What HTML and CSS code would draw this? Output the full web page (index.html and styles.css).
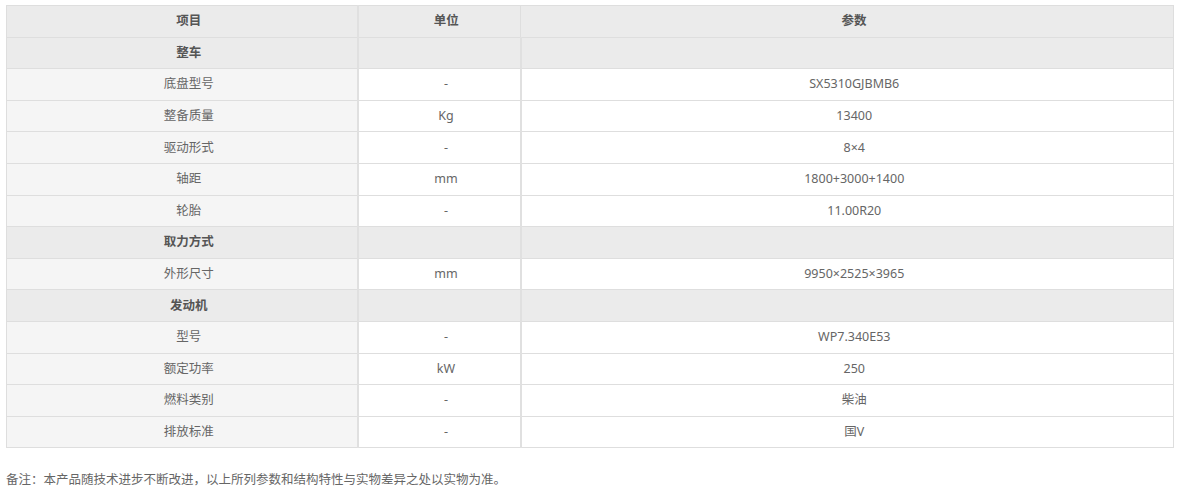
FILE: index.html
```html
<!DOCTYPE html>
<html lang="zh-CN">
<head>
<meta charset="utf-8">
<link rel="stylesheet" href="styles.css">
</head>
<body>
<div class="page">
  <table class="spec">
    <colgroup>
      <col class="c1"><col class="c2"><col class="c3">
    </colgroup>
    <thead>
      <tr class="head"><th>项目</th><th>单位</th><th>参数</th></tr>
    </thead>
    <tbody>
      <tr class="group"><th>整车</th><td></td><td></td></tr>
      <tr><th>底盘型号</th><td>-</td><td>SX5310GJBMB6</td></tr>
      <tr><th>整备质量</th><td>Kg</td><td>13400</td></tr>
      <tr><th>驱动形式</th><td>-</td><td>8×4</td></tr>
      <tr><th>轴距</th><td>mm</td><td>1800+3000+1400</td></tr>
      <tr><th>轮胎</th><td>-</td><td>11.00R20</td></tr>
      <tr class="group"><th>取力方式</th><td></td><td></td></tr>
      <tr><th>外形尺寸</th><td>mm</td><td>9950×2525×3965</td></tr>
      <tr class="group"><th>发动机</th><td></td><td></td></tr>
      <tr><th>型号</th><td>-</td><td>WP7.340E53</td></tr>
      <tr><th>额定功率</th><td>kW</td><td>250</td></tr>
      <tr><th>燃料类别</th><td>-</td><td>柴油</td></tr>
      <tr><th>排放标准</th><td>-</td><td>国V</td></tr>
    </tbody>
  </table>
  <p class="note">备注：本产品随技术进步不断改进，以上所列参数和结构特性与实物差异之处以实物为准。</p>
</div>
</body>
</html>
```
FILE: styles.css
```css
html, body {
  margin: 0;
  padding: 0;
  background: #fff;
}
body {
  font-family: "Noto Sans", "Noto Sans CJK SC", sans-serif;
  color: #666;
  font-size: 12.5px;
}
.page {
  padding: 5px 5px 0 6px;
}
.spec {
  width: 1168px;
  border-collapse: collapse;
  table-layout: fixed;
  border: 1px solid #dcdcdc;
}
.c1 { width: 351px; }
.c2 { width: 163px; }
.c3 { width: auto; }
.spec th, .spec td {
  height: 30.6px;
  padding: 0 0 0 14px;
  text-align: center;
  vertical-align: middle;
  border: 1px solid #dedede;
  font-weight: normal;
  line-height: 16px;
}
.spec th:first-child {
  border-right: 2px solid #e0e0e0;
}
.spec td:nth-child(2) {
  border-right: 2px solid #e0e0e0;
}
.spec tbody th {
  background: #f5f5f5;
}
.spec tbody td {
  background: #fff;
}
.spec .head th {
  background: #ebebeb;
  font-weight: bold;
  color: #555;
}
.spec .group th, .spec .group td {
  background: #ebebeb;
}
.spec .group th {
  font-weight: bold;
  color: #555;
}
.note {
  margin: 24px 0 0;
  font-size: 12.5px;
  color: #666;
  line-height: 16px;
}
```
